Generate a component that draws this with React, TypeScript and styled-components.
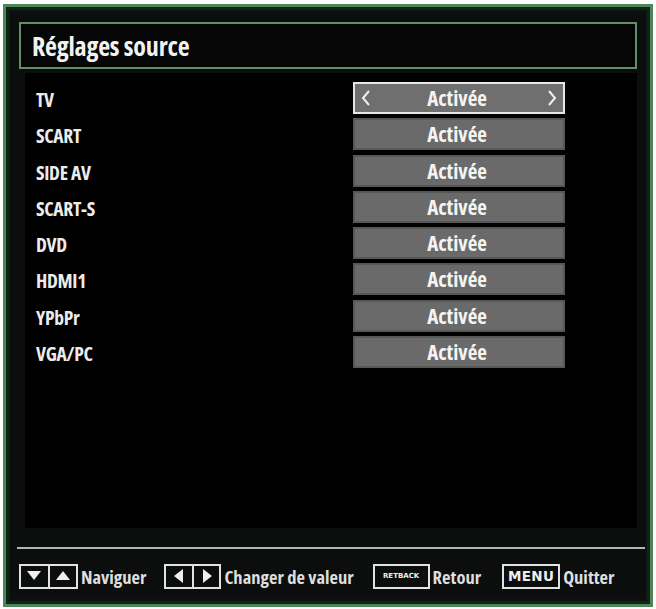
import React from "react";
import styled, { createGlobalStyle } from "styled-components";

const Global = createGlobalStyle`
  html, body { margin: 0; padding: 0; background: #ffffff; }
  body { font-family: "Open Sans", "DejaVu Sans", sans-serif; }
`;

const FONT = `"Open Sans", "DejaVu Sans", sans-serif`;

const Frame = styled.div`
  box-sizing: border-box;
  margin: 4px 0 0 3px;
  width: 650px;
  height: 603px;
  border: 3px solid #4f8558;
  box-shadow: inset 0 0 0 3px #0f2616, inset 0 0 0 5px #0b140e;
  background: #0c0e0d;
  display: flex;
  flex-direction: column;
  padding: 15px 13px 0 13px;
`;

const TitleBar = styled.div`
  box-sizing: border-box;
  height: 47px;
  border: 2px solid #628f69;
  background: #050605;
  display: flex;
  align-items: center;
  padding-left: 11px;
`;

const Title = styled.h1`
  margin: 0;
  font-family: ${FONT};
  font-stretch: 75%;
  font-weight: 700;
  font-size: 26px;
  color: #f2f2f2;
  letter-spacing: -0.2px;
`;

const Panel = styled.div`
  margin: 4px 0 0 6px;
  width: 612px;
  height: 455px;
  background: #000;
  box-sizing: border-box;
  padding: 9px 0 0 11px;
  display: flex;
  flex-direction: column;
  gap: 4.3px;
`;

const Row = styled.div`
  display: grid;
  grid-template-columns: 317px 212px;
  height: 32px;
  align-items: center;
`;

const Label = styled.span`
  font-family: ${FONT};
  font-stretch: 75%;
  font-weight: 700;
  font-size: 19.5px;
  color: #ececec;
  letter-spacing: -0.3px;
  padding-top: 3px;
`;

const Value = styled.div<{ $active?: boolean }>`
  box-sizing: border-box;
  height: 32px;
  background: ${(p) => (p.$active ? "#6f6f6f" : "#6a6a6a")};
  border: 2px solid ${(p) => (p.$active ? "#e6e6e6" : "#575757")};
  display: flex;
  align-items: center;
  justify-content: space-between;
  padding: 0 6px;
  font-family: ${FONT};
  font-stretch: 75%;
  font-weight: 700;
  font-size: 21px;
  color: #f4f4f4;
`;

const ValueText = styled.span`
  flex: 1;
  text-align: center;
  padding-right: 4px;
`;

const Chevron = styled.svg`
  width: 10px;
  height: 18px;
  flex: none;
`;

const Separator = styled.div`
  margin: 19px -8px 0 -2px;
  height: 2px;
  background: #b4b4b4;
`;

const Footer = styled.div`
  display: flex;
  align-items: center;
  margin-top: 14px;
  height: 26px;
  white-space: nowrap;
`;

const Hint = styled.div<{ $gap: number }>`
  display: flex;
  align-items: center;
  gap: 3px;
  margin-right: ${(p) => p.$gap}px;
`;

const HintText = styled.span`
  font-family: ${FONT};
  font-stretch: 75%;
  font-weight: 700;
  font-size: 18.5px;
  color: #dedede;
`;

const KeyBox = styled.div<{ $w: number }>`
  box-sizing: border-box;
  width: ${(p) => p.$w}px;
  height: 25px;
  border: 2px solid #e2e2e2;
  display: flex;
  align-items: stretch;
  flex: none;
`;

const KeyCell = styled.div<{ $divider?: boolean }>`
  flex: 1;
  display: flex;
  align-items: center;
  justify-content: center;
  border-left: ${(p) => (p.$divider ? "2px solid #e2e2e2" : "none")};
`;

const KeyLabel = styled.span<{ $size: number }>`
  flex: 1;
  align-self: center;
  text-align: center;
  font-family: "DejaVu Sans", sans-serif;
  font-weight: 700;
  font-size: ${(p) => p.$size}px;
  color: #eeeeee;
  letter-spacing: ${(p) => (p.$size < 10 ? "0" : "0.3px")};
`;

const Tri = ({ dir }: { dir: "up" | "down" | "left" | "right" }) => {
  const pts = {
    down: "1,3 15,3 8,12",
    up: "1,12 15,12 8,3",
    left: "12,1 12,15 3,8",
    right: "4,1 4,15 13,8",
  }[dir];
  return (
    <svg width="16" height="16" viewBox="0 0 16 16">
      <polygon points={pts} fill="#f0f0f0" />
    </svg>
  );
};

const sources = ["TV", "SCART", "SIDE AV", "SCART-S", "DVD", "HDMI1", "YPbPr", "VGA/PC"];

export default function App() {
  return (
    <>
      <Global />
      <Frame>
        <TitleBar>
          <Title>Réglages source</Title>
        </TitleBar>
        <Panel>
          {sources.map((s, i) => (
            <Row key={s}>
              <Label>{s}</Label>
              <Value $active={i === 0}>
                {i === 0 && (
                  <Chevron viewBox="0 0 10 18">
                    <polyline points="8,2 2,9 8,16" fill="none" stroke="#f0f0f0" strokeWidth="2" />
                  </Chevron>
                )}
                <ValueText>Activée</ValueText>
                {i === 0 && (
                  <Chevron viewBox="0 0 10 18">
                    <polyline points="2,2 8,9 2,16" fill="none" stroke="#f0f0f0" strokeWidth="2" />
                  </Chevron>
                )}
              </Value>
            </Row>
          ))}
        </Panel>
        <Separator />
        <Footer>
          <Hint $gap={18}>
            <KeyBox $w={59}>
              <KeyCell><Tri dir="down" /></KeyCell>
              <KeyCell $divider><Tri dir="up" /></KeyCell>
            </KeyBox>
            <HintText>Naviguer</HintText>
          </Hint>
          <Hint $gap={19}>
            <KeyBox $w={57}>
              <KeyCell><Tri dir="left" /></KeyCell>
              <KeyCell $divider><Tri dir="right" /></KeyCell>
            </KeyBox>
            <HintText>Changer de valeur</HintText>
          </Hint>
          <Hint $gap={21}>
            <KeyBox $w={57}>
              <KeyLabel $size={7}>RETBACK</KeyLabel>
            </KeyBox>
            <HintText>Retour</HintText>
          </Hint>
          <Hint $gap={0}>
            <KeyBox $w={58}>
              <KeyLabel $size={13.5}>MENU</KeyLabel>
            </KeyBox>
            <HintText>Quitter</HintText>
          </Hint>
        </Footer>
      </Frame>
    </>
  );
}
